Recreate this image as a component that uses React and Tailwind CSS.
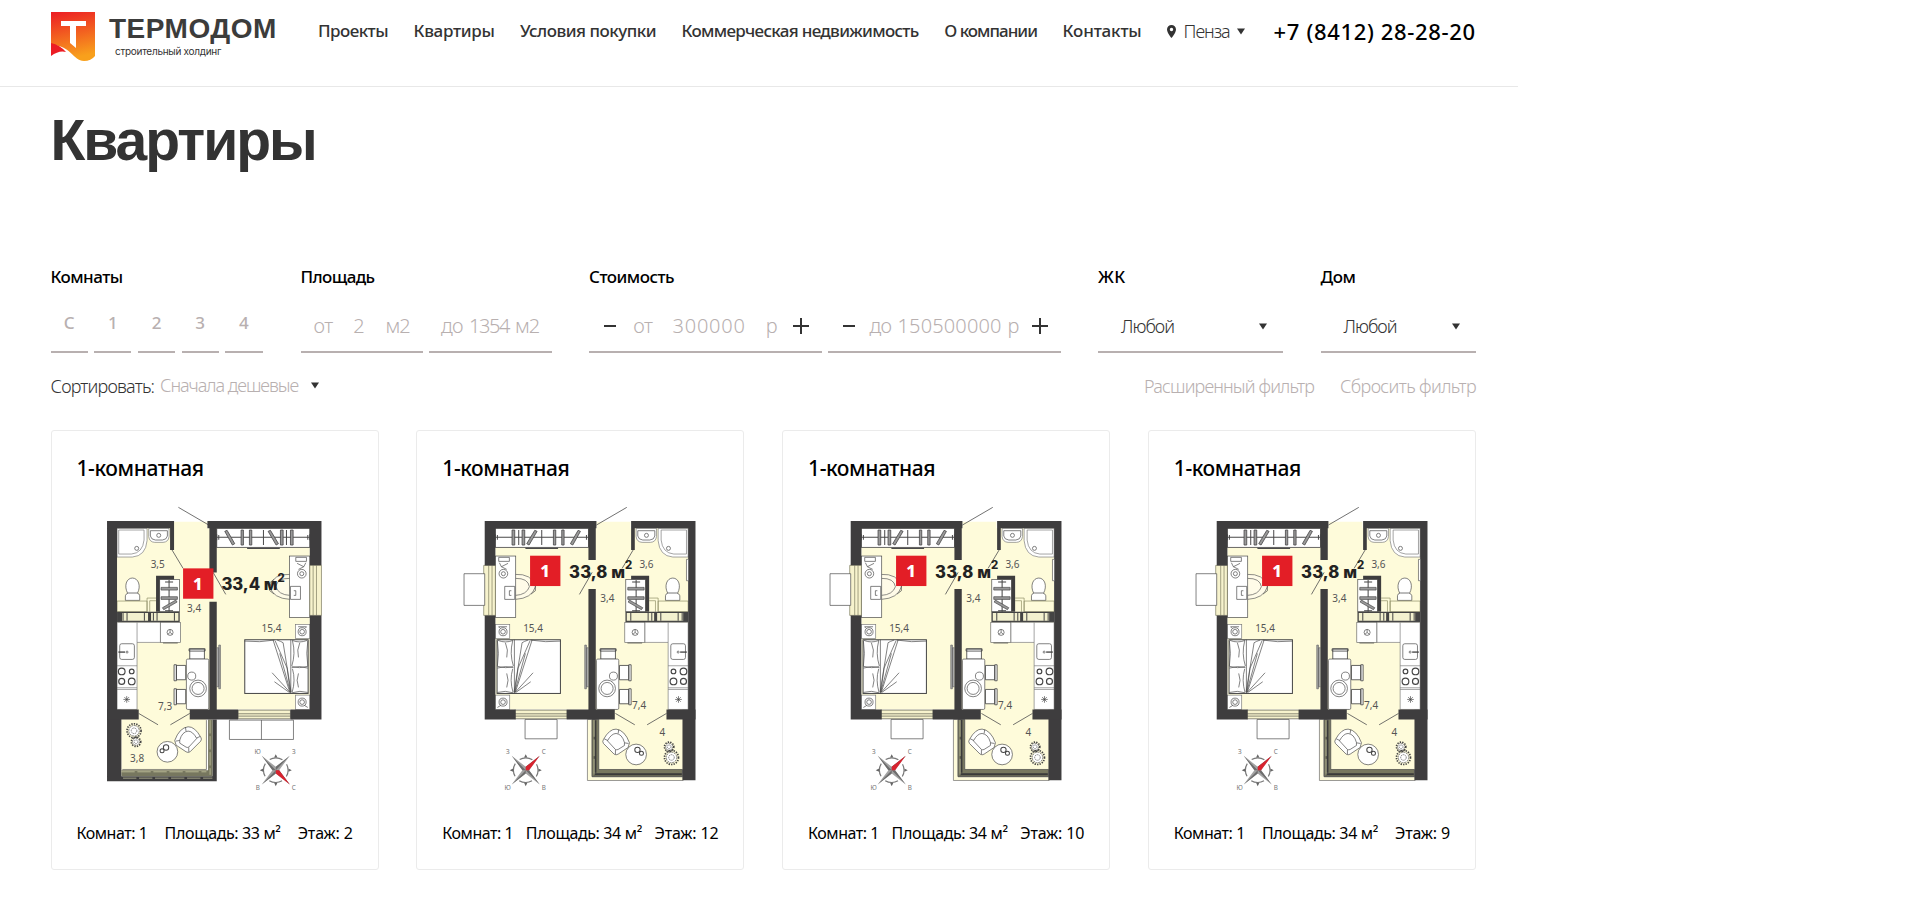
const Arrow = () => (
  <svg className="h-[7px] w-[8px] shrink-0" viewBox="0 0 8 7"><path d="M0 .5H8L4 6.5Z" fill="#333" /></svg>
);

const Hangers = () => (
  <g fill="none" stroke="#4a494a" strokeWidth="2.5">
    <rect x="531" y="325" width="279" height="57" fill="#fff" />
    <path d="M531 352H810M531 343V361M537 345V359M804 345V359M810 343V361" strokeWidth="3" />
    <g fill="#999">
      <path d="M604 330H611V375H604ZM629 330H636V375H629ZM722 330H730V375H722ZM752 330H760V375H752ZM555 334 562 331 585 371 578 375ZM685 334 692 331 716 371 709 375Z" />
    </g>
    <path d="M671 330V375M740 330V375" strokeWidth="3" />
    <path d="M622 385H720" strokeWidth="4" />
  </g>
);

const Interior = () => (
  <g fill="none" stroke="#444" strokeWidth="2">
    {/* bathroom */}
    <path d="M232 325H322V362Q318 408 278 411H232Z" fill="#fff" stroke="#777" />
    <path d="M237 330H313V360Q309 399 275 402H237Z" stroke="#777" />
    <circle cx="291" cy="385" r="6" />
    <path d="M327 325H388V350Q386 366 370 367H345Q329 366 327 350Z" fill="#fff" stroke="#777" />
    <path d="M332 332H383V348Q381 359 368 360H347Q334 359 332 348Z" />
    <circle cx="357" cy="346" r="6" />
    <path d="M264 520C252 498 260 474 278 474S305 498 293 520Z" fill="#fff" />
    <path d="M257 541V527Q259 520 266 519H292Q299 520 300 527V541Z" fill="#fff" />
    <path d="M232 543H322V575H232ZM322 575V534H349M330 575V542H349" stroke="#8a8960" />
    {/* closet */}
    <rect x="360" y="478" width="59" height="97" fill="#fff" />
    <path d="M388 480V575M376 486H400M376 572H400" strokeWidth="3" />
    <path d="M364 502H413V510H364ZM364 530H413V538H364ZM368 563 408 540 412 546 372 569Z" fill="#999" />
    {/* ducts */}
    <rect x="232" y="575" width="188" height="31" fill="#444" stroke="none" />
    <path d="M247 579H325V602H247ZM334 579H416V602H334Z" fill="#f3f1cf" stroke="none" />
    <path d="M250 579V602M262 579V602M314 579V602M341 579V602M352 579V602M404 579V602" strokeWidth="3" />
    {/* kitchen */}
    <path d="M232 607H362V667H292V868H232Z" fill="#fff" stroke="#777" />
    <path d="M292 607V667M232 737H292M232 803H292M232 808H292" stroke="#777" />
    <rect x="362" y="607" width="60" height="60" fill="#fff" stroke="#666" />
    <circle cx="391" cy="637" r="9" /><path d="M391 628V637M391 637 384 643M391 637 398 643M370 669H414" />
    <rect x="240" y="671" width="44" height="47" rx="6" fill="#fff" />
    <path d="M236 696H256" strokeWidth="4" /><circle cx="262" cy="696" r="3" />
    <g strokeWidth="3.5"><circle cx="246" cy="754" r="10" /><circle cx="276" cy="754" r="7" /><circle cx="246" cy="784" r="9" /><circle cx="276" cy="784" r="10" /></g>
    <path d="M261 828V848M251 838H271M254 831 268 845M268 831 254 845" />
    {/* dining table */}
    <path d="M450 717V687H494V717ZM448 686H496V693H448ZM438 736H410V779H438ZM403 734H410V782H403ZM438 808H410V851H438ZM403 806H410V854H403Z" fill="#fff" strokeWidth="2.5" />
    <rect x="440" y="717" width="67" height="151" rx="4" fill="#fff" />
    <circle cx="456" cy="768" r="12" fill="#fff" /><circle cx="475" cy="805" r="25" /><circle cx="475" cy="805" r="18" />
    {/* bedroom */}
    <path d="M531 683H537V800H531M537 675H542V806H537Z" fill="#aaa" stroke="#666" />
    <rect x="767" y="613" width="43" height="42" fill="#fff" stroke="#777" />
    <rect x="767" y="825" width="43" height="43" fill="#fff" stroke="#777" />
    <circle cx="787" cy="635" r="12" /><circle cx="787" cy="635" r="7" /><path d="M775 620H800L797 624" />
    <circle cx="787" cy="846" r="12" /><circle cx="787" cy="846" r="7" /><path d="M794 856 804 862" />
    <rect x="615" y="659" width="190" height="161" fill="#fff" strokeWidth="3" />
    <path d="M753 659V820M757 740Q778 746 804 739M756 742Q780 736 804 744M758 662Q768 700 756 738M804 662Q798 700 804 738M758 746Q768 780 757 817M780 668Q770 690 776 712M776 760Q768 780 776 802M757 661Q780 670 802 661M757 818Q780 810 804 817M614 663Q660 668 704 660" />
    <path d="M700 660 750 816M712 660Q724 664 730 668L754 816M706 662 742 744M742 744 752 818M697 758 750 816M704 785 750 818M720 700 752 816" />
    {/* desk */}
    <path d="M752 463Q700 460 690 500Q700 535 750 538" fill="#fffbe8" stroke="#555" />
    <path d="M750 475Q712 474 708 500Q716 524 750 526" stroke="#555" />
    <path d="M703 478 690 488V512L703 522" />
    <rect x="749" y="408" width="61" height="184" fill="#fff" />
    <path d="M752 499H782V538H752ZM762 512H768V526H762M768 412H800V424H768ZM772 430 792 440 798 428M792 440 776 448" />
    <circle cx="786" cy="461" r="13" /><circle cx="786" cy="461" r="6" />
    <Hangers />
    {/* windows */}
    <path d="M810 436H845V586H810ZM820 436V586M830 436V586" fill="#f7f3cd" stroke="#77755a" />
    <path d="M595 870H752V896H595ZM595 881H752M595 888H752" fill="#f7f3cd" stroke="#55544a" />
    {/* doors */}
    <path d="M397 390 430 445M416 262 507 315M520 457 558 523M297 880 355 914M450 880 392 914" stroke="#555" strokeWidth="2.5" />
  </g>
);

const Walls = () => (
  <g fill="#3e3d3e">
    <path d="M403 303V390H391V325H232V868H297V898H202V303Z" />
    <path d="M503 303H845V436H810V325H531V457H509V325H503ZM509 545H531V868H595V898H450V868H509ZM810 586H845V898H752V868H810Z" />
    <path d="M349 467H403V478H360V575H349Z" />
  </g>
);

const Armchair = () => (
  <g fill="#fff" stroke="#444" strokeWidth="2">
    <path d="M-40 4Q-26-34 0-37Q20-38 38-6Q42 0 38 6L6 38Q0 42-6 38L-36 18Z" />
    <path d="M-25 3Q-18-22 0-24Q14-24 26-2L2 24Q-2 26-6 24L-25 12Z" />
    <path d="M-37 6-25 4M2 38V25M-8-36-6-24M36-8 25-3" />
  </g>
);

const Plant = ({ r }) => (
  <g fill="none" stroke="#444">
    <circle r={r} strokeWidth="5" strokeDasharray="4 3.5" />
    <circle r={r * 0.75} strokeWidth="2" strokeDasharray="6 2" fill="#fff" />
    <circle r={r * 0.4} strokeWidth="2" strokeDasharray="4 2" />
  </g>
);

const Compass = ({ letters, red }) => (
  <g>
    <circle r="37" fill="none" stroke="#777" strokeWidth="3.5" strokeDasharray="40 18.1" strokeDashoffset="20" />
    <path d="M0-48 5-38H-5ZM0 48 5 38H-5ZM-48 0-38 5V-5ZM48 0 38 5V-5Z" fill="#666" />
    <path d="M0-10 42-43 10 0 42 43 0 10-42 43-10 0-42-43Z" fill="#a3a3a3" />
    <path d="M0 0 0-10 42-43ZM0 0 10 0 42 43ZM0 0 0 10-42 43ZM0 0-10 0-42-43Z" fill="#6d6d6d" />
    <path d={red} fill="#d8232f" />
    <g fontSize="19" fill="#777" textAnchor="middle">
      <text x="-54" y="-47">{letters[0]}</text><text x="54" y="-47">{letters[1]}</text>
      <text x="-54" y="61">{letters[2]}</text><text x="54" y="61">{letters[3]}</text>
    </g>
  </g>
);

const Area = ({ x, y, value }) => (
  <g fontWeight="800" fill="#222" fontFamily="Inter">
    <text x={x} y={y} fontSize="50" textLength="168" lengthAdjust="spacing">{value + " м"}</text>
    <text x={x + 168} y={y - 26} fontSize="34">2</text>
  </g>
);

const PlanLeft = () => (
  <svg className="block w-full" viewBox="37 201 978 960" fontFamily="Noto Sans">
    <path d="M232 325H402V305H503V325H810V868H500V1060H245V868H232Z" fill="#fefbda" />
    <path d="M202 868H245V1068H518V898H531V1083H202Z" fill="#3e3d3e" />
    <path d="M245 1050H505V898H518V1068H245Z" fill="#77775f" />
    <path d="M245 1055H500M511 900V1064M250 1074H518" stroke="#d5d4ac" strokeWidth="2" strokeDasharray="40 8" />
    <path d="M500 900V1048H248" stroke="#555" strokeWidth="2" fill="none" />
    <Interior />
    <Walls />
    <path d="M569 900H761V958H569ZM665 900V958" fill="#fff" stroke="#444" strokeWidth="2" />
    <g transform="translate(445 957)"><Armchair /></g>
    <circle cx="383" cy="995" r="31" fill="#fff" stroke="#444" strokeWidth="2" />
    <g fill="none" stroke="#444" strokeWidth="3"><circle cx="379" cy="982" r="8" /><circle cx="367" cy="992" r="6" /></g>
    <g transform="translate(283 932)"><Plant r={21} /></g>
    <g transform="translate(289 965)"><Plant r={14} /></g>
    <g fontSize="30" fill="#555" textAnchor="middle">
      <text x="354" y="444">3,5</text><text x="463" y="577">3,4</text><text x="695" y="637">15,4</text>
      <text x="376" y="869">7,3</text><text x="292" y="1026">3,8</text>
    </g>
    <rect x="430" y="445" width="91" height="91" fill="#e31e26" />
    <text x="474" y="509" fontSize="50" fontWeight="800" fill="#fff" textAnchor="middle">1</text>
    <Area x={545} y={511} value="33,4" />
    <g transform="translate(708 1050)"><Compass letters={["Ю", "З", "В", "С"]} red="M0 0 10 0 42 43 0 10Z" /></g>
  </svg>
);

const PlanRight = () => (
  <svg className="block w-full" viewBox="52 201 978 960" fontFamily="Noto Sans">
    <path d="M287 325H590V305H692V325H865V868H850V1050H597V868H287Z" fill="#fefbda" />
    <path d="M563 898H577V1070H850V1081H563Z" fill="#fefbda" stroke="#666" strokeWidth="2" />
    <path d="M577 898H597V1048H848V1069H577Z" fill="#77775f" stroke="#444" strokeWidth="2" />
    <path d="M587 900V1058M582 1062H846" stroke="#3a3a3a" strokeWidth="6" />
    <path d="M583 900V1064" stroke="#d5d4ac" strokeWidth="2" strokeDasharray="50 8" />
    <path d="M577 898H590V868H577ZM848 868H887V1080H848Z" fill="#3e3d3e" />
    <g transform="matrix(-1 0 0 1 1097 0)"><Interior /></g>
    <path d="M590 303H255V436H287V325H566V420H588V325H590ZM566 507H588V868H645V898H501V868H566ZM287 586H255V898H348V868H287ZM692 303H887V898H800V868H865V325H705V390H694V303Z" fill="#3e3d3e" />
    <path d="M748 467H694V478H737V575H748Z" fill="#3e3d3e" />
    <path d="M376 898H472V956H376ZM193 461H255V556H193Z" fill="#fff" stroke="#444" strokeWidth="2" />
    <path d="M860 418H866V482H860Z" fill="#fff" stroke="#555" strokeWidth="2" />
    <g transform="translate(649 964) scale(-1 1)"><Armchair /></g>
    <circle cx="709" cy="1003" r="31" fill="#fff" stroke="#444" strokeWidth="2" />
    <g fill="none" stroke="#444" strokeWidth="3"><circle cx="713" cy="989" r="8" /><circle cx="725" cy="999" r="6" /></g>
    <g transform="translate(808 980)"><Plant r={14} /></g>
    <g transform="translate(815 1012)"><Plant r={21} /></g>
    <g fontSize="30" fill="#555" textAnchor="middle">
      <text x="740" y="444">3,6</text><text x="623" y="547">3,4</text><text x="400" y="637">15,4</text>
      <text x="718" y="868">7,4</text><text x="788" y="947">4</text>
    </g>
    <rect x="391" y="407" width="91" height="91" fill="#e31e26" />
    <text x="436" y="471" fontSize="50" fontWeight="800" fill="#fff" textAnchor="middle">1</text>
    <Area x={508} y={473} value="33,8" />
    <g transform="translate(378 1050)"><Compass letters={["З", "С", "Ю", "В"]} red="M0 0 0-10 42-43 10 0Z" /></g>
  </svg>
);

const flats = [
  { area: "33", floor: "2", Plan: PlanLeft },
  { area: "34", floor: "12", Plan: PlanRight },
  { area: "34", floor: "10", Plan: PlanRight },
  { area: "34", floor: "9", Plan: PlanRight },
];

const nav = [
  ["Проекты", "tracking-[-0.54px]"],
  ["Квартиры", "tracking-[-0.31px]"],
  ["Условия покупки", "tracking-[-0.49px]"],
  ["Коммерческая недвижимость", "tracking-[-0.68px]"],
  ["О компании", "tracking-[-0.97px]"],
  ["Контакты", "tracking-[-0.15px]"],
];

const Minus = () => <svg className="h-4 w-3" viewBox="0 0 12 16"><path d="M0 8H12" stroke="#333" strokeWidth="2" /></svg>;
const Plus = () => <svg className="size-4" viewBox="0 0 16 16"><path d="M0 8H16M8 0V16" stroke="#333" strokeWidth="2" /></svg>;

const Label = ({ className, children }) => (
  <div className={"h-[39px] text-[17px] font-medium leading-[26px] " + className}>{children}</div>
);

const Field = ({ className, children }) => (
  <div className={"flex h-[50px] items-center whitespace-nowrap border-b-2 border-[#b8b0b0] pb-[2px] text-[20px] font-light text-[#b8b0b0] " + className}>{children}</div>
);

const Select = ({ className, children }) => (
  <div className={"flex h-[50px] items-center justify-between border-b-2 border-[#b8b0b0] pb-[2px] pl-[23px] pr-[16px] text-[18px] font-light tracking-[-0.98px] text-[#333] " + className}>
    {children}
    <Arrow />
  </div>
);

export default function App() {
  return (
    <div className="h-[914px] w-[1518px] overflow-hidden bg-white font-['Noto_Sans',sans-serif] text-black">
      <header className="flex h-[87px] whitespace-nowrap border-b border-[#e8e8e8] pl-[51px] text-[#333]">
        <svg className="mt-3 h-[49px] w-11 shrink-0" viewBox="0 0 44 49">
          <defs><linearGradient id="g" x1="0" y1="0" x2=".2" y2="1"><stop offset="0" stopColor="#ec1c24" /><stop offset="1" stopColor="#f8a01c" /></linearGradient></defs>
          <path d="M0 0H44V44Q40 49 33 49C22 49 20 33 0 33Z" fill="url(#g)" />
          <path d="M0 31Q9 33 15 40Q8 38 0 44Z" fill="#ec1c24" />
          <path d="M10 9H35V14H25V36L19 31V14H10Z" fill="#fff" />
        </svg>
        <div className="ml-[14px] mt-[12px] flex w-[209px] shrink-0 flex-col font-['Liberation_Sans',sans-serif]">
          <span className="text-[28px] font-bold leading-[34px] tracking-[0.5px] text-[#3c3c3b]">ТЕРМОДОМ</span>
          <span className="ml-[6px] mt-[-1px] font-['Inter',sans-serif] text-[10px] leading-[12px] tracking-[-0.28px]">строительный холдинг</span>
        </div>
        <nav className="mt-[19px] flex h-6 gap-[25.5px] text-[17px] font-medium leading-6">
          {nav.map(([t, tracking]) => <a key={t} className={tracking}>{t}</a>)}
        </nav>
        <div className="ml-[25px] mt-[19px] flex h-6 items-center">
          <svg className="h-[13px] w-[9px]" viewBox="0 0 9 13"><path fillRule="evenodd" d="M4.5 0A4.5 4.5 0 0 0 0 4.5C0 8 4.5 13 4.5 13S9 8 9 4.5A4.5 4.5 0 0 0 4.5 0ZM4.5 6.2A1.7 1.7 0 1 1 4.5 2.8A1.7 1.7 0 0 1 4.5 6.2Z" fill="#333" /></svg>
          <span className="ml-2 mr-[7px] text-[18px] font-light tracking-[-1.04px]">Пенза</span>
          <Arrow />
        </div>
        <span className="ml-[29px] mt-[13px] text-[22px] font-medium leading-9 tracking-[0.65px] text-black">+7 (8412) 28-28-20</span>
      </header>
      <main className="pl-[50.5px] pr-[42px]">
        <h1 className="h-[177px] pt-[18px] font-['Liberation_Sans',sans-serif] text-[57px] font-bold leading-[70px] tracking-[-2px] text-[#333]">Квартиры</h1>
        <section className="flex">
          <div className="w-[250px]">
            <Label className="tracking-[-0.55px]">Комнаты</Label>
            <div className="flex gap-[6.4px] text-[17px] font-medium text-[#b8b0b0]">
              {["С", "1", "2", "3", "4"].map((n) => <div key={n} className="h-[50px] w-[37.3px] border-b-2 border-[#b8b0b0] pt-[8px] text-center leading-6">{n}</div>)}
            </div>
          </div>
          <div className="w-[288.5px]">
            <Label className="tracking-[-0.6px]">Площадь</Label>
            <div className="flex gap-[6px]">
              <Field className="w-[122px] justify-between px-[13px]"><span className="tracking-[-0.6px]">от</span><span>2</span><span className="tracking-[-1.1px]">м2</span></Field>
              <Field className="w-[123px] justify-center gap-[6px]"><span className="tracking-[-0.6px]">до</span><span className="tracking-[-1.4px]">1354</span><span className="tracking-[-1.1px]">м2</span></Field>
            </div>
          </div>
          <div className="w-[509px]">
            <Label className="tracking-[-0.52px]">Стоимость</Label>
            <div className="flex gap-[6px]">
              <Field className="w-[233px] justify-between pl-[15px] pr-[13px]">
                <Minus /><span className="-ml-[3px] tracking-[-0.6px]">от</span><span className="tracking-[0.74px]">300000</span><span className="-mr-[5px]">р</span><Plus />
              </Field>
              <Field className="w-[233px] justify-between pl-[15px] pr-[13px]">
                <Minus /><span className="flex gap-[6px]"><span className="tracking-[-0.6px]">до</span><span className="tracking-[0.14px]">150500000</span><span className="tracking-[-1.9px]">р</span></span><Plus />
              </Field>
            </div>
          </div>
          <div className="w-[222.5px]">
            <Label className="tracking-[0.5px]">ЖК</Label>
            <Select className="w-[185px]">Любой</Select>
          </div>
          <div className="w-[155px]">
            <Label className="tracking-[-0.42px]">Дом</Label>
            <Select className="w-[155px]">Любой</Select>
          </div>
        </section>
        <div className="flex h-[77px] items-start whitespace-nowrap pt-[20px] text-[18px] font-light leading-[26px] text-[#b8b0b0]">
          <span className="tracking-[-0.8px] text-[#333]">Сортировать:</span>
          <span className="-mt-px ml-[6px] tracking-[-1.04px]">Сначала дешевые</span>
          <span className="ml-[13px] flex h-[24px] items-center"><Arrow /></span>
          <span className="ml-auto tracking-[-0.86px]">Расширенный фильтр</span>
          <span className="ml-[26px] tracking-[-0.62px]">Сбросить фильтр</span>
        </div>
        <section className="grid grid-cols-4 gap-[37.6px]">
          {flats.map(({ area, floor, Plan }, i) => (
            <article key={i} className="h-[440px] rounded-[3px] border border-[#ebebeb]">
              <h2 className="h-[56px] pl-[25px] pt-[20px] text-[21px] font-medium leading-[34px] tracking-[-0.4px]">1-комнатная</h2>
              <Plan />
              <div className="flex justify-between whitespace-nowrap px-[25px] pt-[14px] text-[16px] leading-6">
                <span className="tracking-[-0.45px]">Комнат: 1</span>
                <span className="tracking-[-0.35px]">Площадь: {area} м²</span>
                <span className="tracking-[-0.16px]">Этаж: {floor}</span>
              </div>
            </article>
          ))}
        </section>
      </main>
    </div>
  );
}
